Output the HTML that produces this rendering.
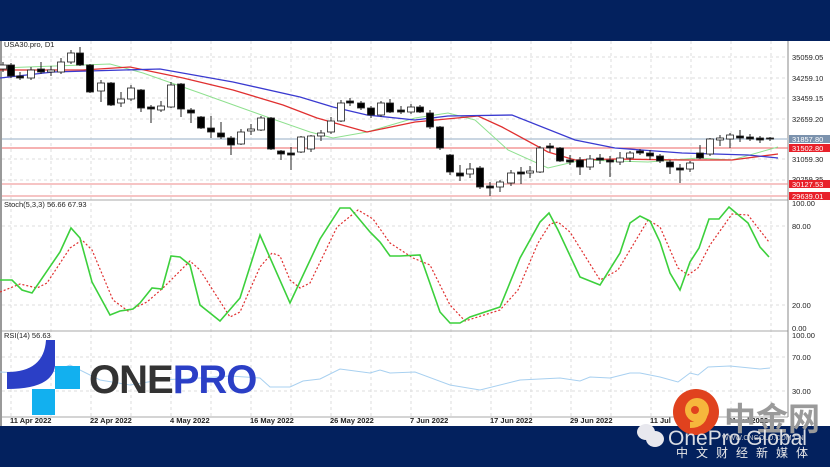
<!DOCTYPE html>
<html><head><meta charset="utf-8"><style>
html,body{margin:0;padding:0;width:830px;height:467px;overflow:hidden;background:#fff;font-family:"Liberation Sans","Noto Sans CJK SC",sans-serif}
svg{position:absolute;left:0;top:0}
</style></head><body>
<svg width="830" height="467" viewBox="0 0 830 467" xmlns="http://www.w3.org/2000/svg" font-family="Liberation Sans, Noto Sans CJK SC, sans-serif">
<rect x="0" y="0" width="830" height="41" fill="#03215e"/>
<rect x="0" y="41" width="830" height="385" fill="#fff"/>
<rect x="0" y="41" width="2" height="385" fill="#999"/>
<g stroke="#ddd" stroke-dasharray="3,3" stroke-width="1">
<line x1="2" y1="57" x2="788" y2="57"/><line x1="2" y1="78" x2="788" y2="78"/><line x1="2" y1="98" x2="788" y2="98"/><line x1="2" y1="119" x2="788" y2="119"/><line x1="2" y1="159" x2="788" y2="159"/><line x1="2" y1="180" x2="788" y2="180"/>
<line x1="2" y1="226" x2="788" y2="226"/><line x1="2" y1="305" x2="788" y2="305"/>
<line x1="2" y1="357" x2="788" y2="357"/><line x1="2" y1="391" x2="788" y2="391"/>
</g>
<g id="vg" stroke="#ddd" stroke-dasharray="3,3"></g>
<line x1="2" y1="200" x2="788" y2="200" stroke="#aaa"/>
<line x1="2" y1="331" x2="788" y2="331" stroke="#aaa"/>
<line x1="2" y1="417" x2="788" y2="417" stroke="#aaa"/>
<line x1="788" y1="41" x2="788" y2="417" stroke="#888"/>
<line x1="2" y1="139" x2="788" y2="139" stroke="#b8c8d8" stroke-width="1.5"/>
<line x1="2" y1="148" x2="788" y2="148" stroke="#e66" stroke-width="1"/>
<line x1="2" y1="184" x2="788" y2="184" stroke="#e88" stroke-width="1"/>
<line x1="2" y1="196" x2="788" y2="196" stroke="#e88" stroke-width="1"/>
<polyline fill="none" stroke="#8fe08f" stroke-width="1" points="0,68 110,64 143,73 200,93 267,117 310,132 333,138 367,132 415,118 448,113 475,120 508,150 548,168 582,160 648,162 698,158 732,160 778,147"/>
<polyline fill="none" stroke="#e03030" stroke-width="1.3" points="0,70 83,70 130,67 183,78 233,90 283,105 317,118 367,132 415,122 478,116 502,127 548,152 575,160 615,159 682,160 732,160 778,154"/>
<polyline fill="none" stroke="#3a3ad0" stroke-width="1.3" points="0,78 53,72 160,69 233,82 300,97 333,107 367,115 415,120 448,116 512,115 575,140 615,148 682,153 748,155 778,158"/>
<g id="candles"></g>
<polyline fill="none" stroke="#e03030" stroke-width="1.2" stroke-dasharray="2,2" points="0,292 20,284 37,288 47,283 70,248 82,240 92,250 113,300 128,311 147,302 163,288 190,261 200,270 230,317 240,312 260,267 272,253 280,256 290,280 300,288 310,283 337,227 358,210 373,219 390,243 413,258 430,265 450,305 465,321 500,310 518,290 538,243 550,224 558,222 570,232 600,280 618,270 648,220 660,227 678,268 688,275 698,268 710,245 732,214 748,215 769,242"/>
<polyline fill="none" stroke="#3cd03c" stroke-width="1.6" points="0,280 12,280 22,290 32,293 60,252 71,228 80,238 92,282 110,315 120,311 133,309 140,303 152,288 162,289 171,256 180,257 190,265 200,305 220,321 240,298 260,235 290,303 320,239 340,208 350,208 370,232 380,242 390,256 400,256 420,255 440,312 450,323 460,323 470,317 500,307 520,258 540,222 549,213 558,230 580,277 600,285 620,253 630,223 640,216 650,221 660,242 670,273 680,290 690,262 699,248 709,219 719,219 729,207 748,223 760,247 769,257"/>
<polyline fill="none" stroke="#a8d0f0" stroke-width="1" points="0,372 20,373 50,373 70,365 100,380 130,385 160,380 200,378 230,376 260,378 270,387 290,387 303,381 320,379 340,369 370,373 380,370 390,373 415,372 450,385 480,390 520,380 560,378 580,381 590,377 610,378 630,373 640,373 660,377 678,382 690,373 698,375 708,367 730,366 740,367 760,369 770,368"/>
<g font-size="7.5" fill="#222">
<text x="4" y="47">USA30.pro, D1</text>
<text x="4" y="207">Stoch(5,3,3) 56.66 67.93</text>
<text x="4" y="338">RSI(14) 56.63</text>
<text x="792" y="60">35059.05</text><text x="792" y="81">34259.10</text><text x="792" y="101">33459.15</text><text x="792" y="122">32659.20</text><text x="792" y="162">31059.30</text><text x="792" y="182">30259.35</text>
<text x="792" y="206">100.00</text><text x="792" y="229">80.00</text><text x="792" y="308">20.00</text><text x="792" y="331">0.00</text>
<text x="792" y="338">100.00</text><text x="792" y="360">70.00</text><text x="792" y="394">30.00</text>
</g>
<rect x="789" y="135" width="41" height="8" fill="#7b92ad"/><text x="792" y="142" font-size="7.5" fill="#fff">31857.80</text>
<rect x="789" y="144" width="41" height="8" fill="#e8202a"/><text x="792" y="151" font-size="7.5" fill="#fff">31502.80</text>
<rect x="789" y="180" width="41" height="8" fill="#e8202a"/><text x="792" y="187" font-size="7.5" fill="#fff">30127.53</text>
<rect x="789" y="192" width="41" height="8" fill="#e8202a"/><text x="792" y="199" font-size="7.5" fill="#fff">29639.01</text>
<g font-size="7.5" fill="#222" font-weight="bold">
<text x="10" y="423">11 Apr 2022</text><text x="90" y="423">22 Apr 2022</text><text x="170" y="423">4 May 2022</text><text x="250" y="423">16 May 2022</text><text x="330" y="423">26 May 2022</text><text x="410" y="423">7 Jun 2022</text><text x="490" y="423">17 Jun 2022</text><text x="570" y="423">29 Jun 2022</text><text x="650" y="423">11 Jul</text><text x="728" y="423">21 Jul 2022</text>
</g>
<rect x="0" y="426" width="830" height="41" fill="#03215e"/>
<path d="M46,340 L55,340 L55,366 Q52,389 7,389 L7,372 Q44,372 46,340 Z" fill="#2b3fc6"/>
<rect x="55" y="366" width="25" height="23" fill="#12b0ef"/>
<rect x="32" y="389" width="23" height="26" fill="#12b0ef"/>
<text x="89" y="393" font-size="40" font-weight="bold" fill="#333" letter-spacing="-1">ONE<tspan fill="#2b3fc6">PRO</tspan></text>
<text x="724" y="430" font-size="32" font-weight="bold" fill="#9a9a9a" font-family="Noto Sans CJK SC, sans-serif">中金网</text>
<circle cx="696" cy="412" r="23" fill="#e0421e"/>
<circle cx="697" cy="410" r="12" fill="#f6b73c"/>
<path d="M690,425 Q705,425 705,410" stroke="#f6b73c" stroke-width="6" fill="none"/>
<circle cx="695" cy="410" r="4" fill="#e0421e"/>
<ellipse cx="646" cy="432" rx="9" ry="8" fill="#e8e8ee"/>
<ellipse cx="655" cy="439" rx="9" ry="8" fill="#e8e8ee"/>
<text x="668" y="445" font-size="21" fill="#f2f2f2" opacity="0.9">OnePro Global</text>
<text x="722" y="440" font-size="7" fill="#ccc">WWW.CNGOLD.COM.CN</text>
<text x="676" y="457" font-size="12" fill="#e8e8e8" letter-spacing="8" font-family="Noto Sans CJK SC, sans-serif">中文财经新媒体</text>
</svg>
<script>
var NS="http://www.w3.org/2000/svg";
var vg=document.getElementById('vg');
for(var x=11;x<788;x+=40){var l=document.createElementNS(NS,'line');l.setAttribute('x1',x);l.setAttribute('x2',x);l.setAttribute('y1',41);l.setAttribute('y2',417);vg.appendChild(l);}
var C=[[3,65,69,62,72,0],[11,65,76,63,78,1],[20,76,78,72,80,1],[31,70,78,67,80,0],[41,69,72,62,74,1],[51,70,72,66,76,0],[61,62,72,58,74,0],[71,53,62,50,64,0],[80,53,65,47,66,1],[90,65,92,64,93,1],[101,83,91,80,102,0],[111,83,105,82,106,1],[121,99,103,92,107,0],[131,88,99,85,101,0],[141,90,108,89,112,1],[151,107,109,105,123,1],[161,106,110,101,112,0],[171,85,107,82,108,0],[181,84,109,83,117,1],[191,110,113,108,123,1],[201,117,128,116,129,1],[211,128,132,116,138,1],[221,133,137,122,139,1],[231,138,145,136,155,1],[241,132,144,129,145,0],[251,129,131,124,135,0],[261,118,130,116,131,0],[271,118,149,117,150,1],[281,151,154,150,160,1],[291,153,155,147,170,1],[301,137,152,136,153,0],[311,136,149,135,152,0],[321,133,136,130,141,0],[331,121,132,117,134,0],[341,103,121,100,122,0],[350,101,103,98,106,1],[361,103,108,101,110,1],[371,108,115,106,118,1],[381,103,115,101,117,0],[390,103,112,99,113,1],[401,110,112,106,114,1],[411,107,112,104,114,0],[420,107,112,105,113,1],[430,113,127,110,129,1],[440,127,148,126,150,1],[450,155,172,154,175,1],[460,173,176,165,181,1],[470,169,174,163,178,0],[480,168,187,166,189,1],[490,186,188,182,196,1],[500,182,187,180,192,0],[511,173,183,170,186,0],[521,172,174,167,184,1],[530,171,173,166,178,0],[540,148,172,146,173,0],[550,146,148,143,152,1],[560,148,161,147,162,1],[570,160,162,155,165,1],[580,160,167,157,175,1],[590,159,167,155,170,0],[600,158,160,154,164,1],[610,160,162,156,177,1],[620,158,162,152,165,0],[630,153,158,151,162,0],[640,151,153,149,155,1],[650,153,156,150,160,1],[660,156,161,154,163,1],[670,162,167,160,174,1],[680,168,170,164,183,1],[690,163,169,161,172,0],[700,153,158,145,159,1],[710,139,154,138,156,0],[720,138,140,135,146,0],[730,135,139,133,148,0],[740,136,138,130,142,1],[750,137,139,134,141,1],[760,138,140,136,143,1],[770,138,139,137,141,1]];
var g=document.getElementById('candles');
C.forEach(function(c){var l=document.createElementNS(NS,'line');l.setAttribute('x1',c[0]);l.setAttribute('x2',c[0]);l.setAttribute('y1',c[3]);l.setAttribute('y2',c[4]);l.setAttribute('stroke','#222');g.appendChild(l);
var r=document.createElementNS(NS,'rect');r.setAttribute('x',c[0]-3.5);r.setAttribute('y',c[1]);r.setAttribute('width',7);r.setAttribute('height',Math.max(1,c[2]-c[1]));r.setAttribute('fill',c[5]?'#000':'#fff');r.setAttribute('stroke','#222');r.setAttribute('stroke-width','0.8');g.appendChild(r);});
</script>
</body></html>
